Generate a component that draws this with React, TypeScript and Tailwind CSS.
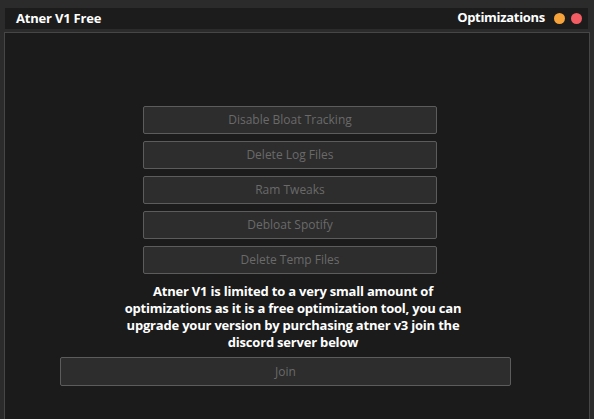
import React from "react";

const actions = [
  "Disable Bloat Tracking",
  "Delete Log Files",
  "Ram Tweaks",
  "Debloat Spotify",
  "Delete Temp Files",
];

export default function App() {
  return (
    <div
      className="w-[594px] h-[419px] overflow-hidden bg-[#2b2b2b] pt-[8px] pl-[5px] pr-[4px] flex flex-col"
      style={{ fontFamily: '"Open Sans", "Noto Sans", sans-serif' }}
    >
      <div className="h-[21px] mr-[2px] bg-[#1c1c1c] flex items-center justify-between pl-[11px] pr-[6px]">
        <span className="text-[13px] font-bold text-white leading-none tracking-[-0.2px]">Atner V1 Free</span>
        <div className="flex items-center">
          <span className="text-[13px] font-bold text-white leading-none mr-[9px] -mt-[3px] tracking-[-0.3px]">
            Optimizations
          </span>
          <span className="w-[11px] h-[11px] rounded-full bg-[#f5a33a]" />
          <span className="w-[11px] h-[11px] rounded-full bg-[#f25c62] ml-[6px]" />
        </div>
      </div>
      <div className="mt-[3px] -ml-[1px] flex-1 border border-[#464646] border-b-0 bg-[#1b1b1b] flex flex-col items-start">
        <div className="mt-[73px] ml-[138px] flex flex-col gap-[7px]">
          {actions.map((a) => (
            <button
              key={a}
              className="w-[294px] h-[28px] bg-[#2d2d2d] border border-[#5c5c5c] rounded-[2px] text-[12px] text-[#6a6a6a]"
            >
              {a}
            </button>
          ))}
        </div>
        <p className="mt-[9px] ml-[110px] w-[356px] text-center text-[13px] font-bold text-white leading-[17px] tracking-[-0.2px]">
          Atner V1 is limited to a very small amount of
          <br />
          optimizations as it is a free optimization tool, you can
          <br />
          upgrade your version by purchasing atner v3 join the
          <br />
          discord server below
        </p>
        <button className="mt-[6px] ml-[55px] w-[451px] h-[29px] bg-[#2d2d2d] border border-[#5c5c5c] rounded-[2px] text-[12px] text-[#6a6a6a]">
          Join
        </button>
      </div>
    </div>
  );
}
